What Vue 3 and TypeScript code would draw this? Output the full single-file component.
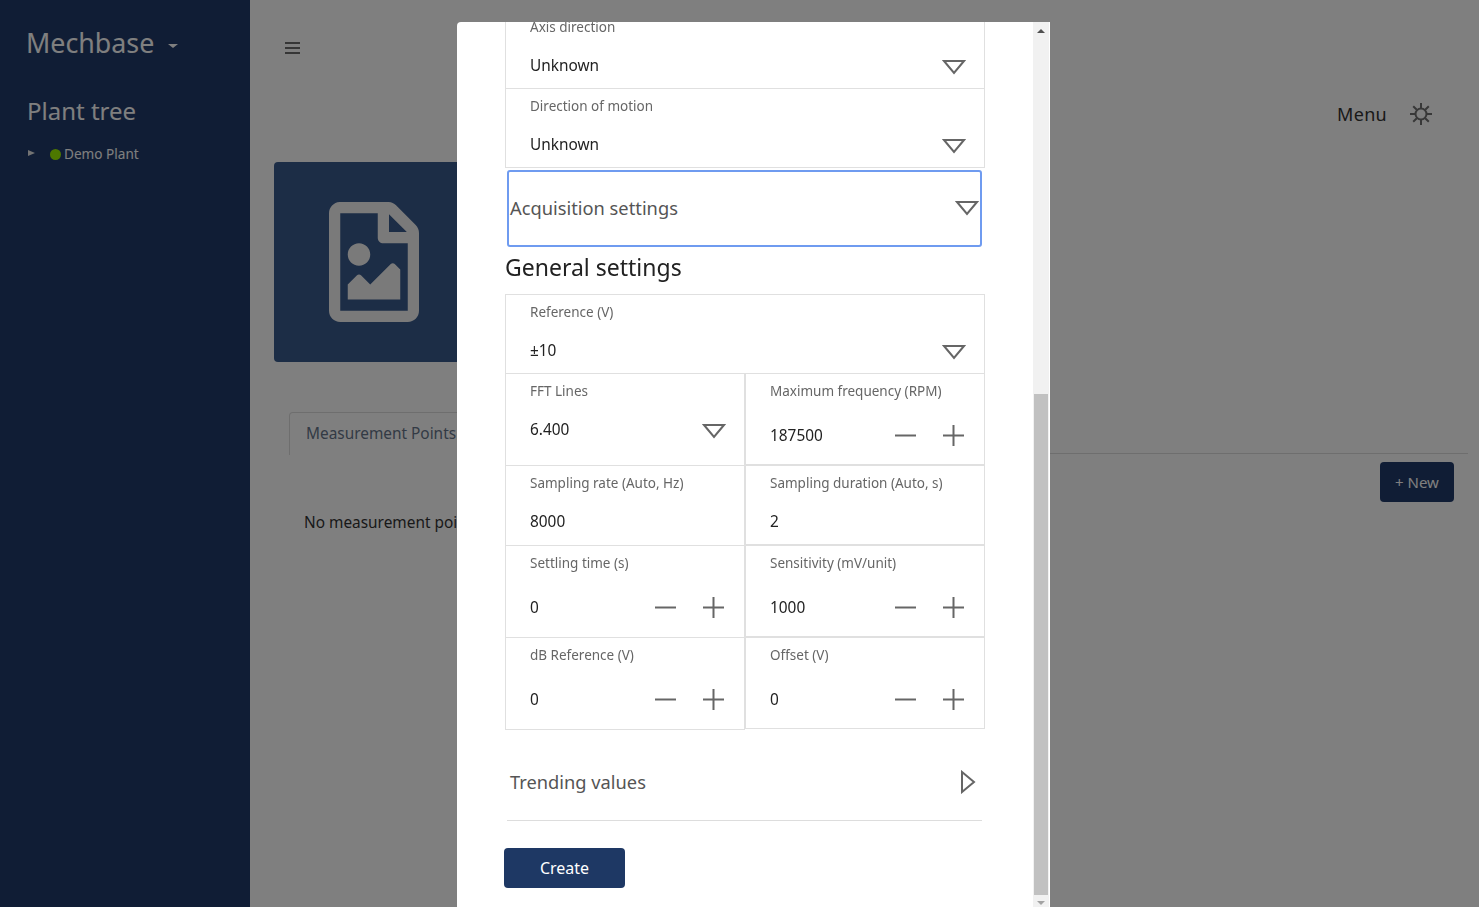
<template>
  <div class="app">
    <aside class="sidebar">
      <div class="brand">Mechbase <span class="brand-caret"></span></div>
      <h2 class="tree-title">Plant tree</h2>
      <div class="tree-node">
        <span class="tree-arrow"></span>
        <span class="tree-dot"></span>
        <span>Demo Plant</span>
      </div>
    </aside>

    <main class="main">
      <div class="topbar">
        <svg class="burger" width="15" height="12" viewBox="0 0 15 12">
          <path d="M0 1h15M0 6h15M0 11h15" stroke="#6c6c6c" stroke-width="2" fill="none" />
        </svg>
      </div>
      <div class="menu-row">
        <span class="menu-label">Menu</span>
        <svg class="sun" width="24" height="24" viewBox="0 0 24 24" fill="none" stroke="#707070" stroke-width="2">
          <circle cx="12" cy="12" r="5.5" />
          <path d="M12 1v5M12 18v5M1 12h5M18 12h5M4.2 4.2l3.6 3.6M16.2 16.2l3.6 3.6M4.2 19.8l3.6-3.6M16.2 7.8l3.6-3.6" />
        </svg>
      </div>

      <div class="cover">
        <svg width="90" height="120" viewBox="0 0 384 512">
          <path fill="#f4f4f4" d="M369.9 97.9L286 14C277 5 264.8-.1 252.1-.1H48C21.5 0 0 21.5 0 48v416c0 26.5 21.5 48 48 48h288c26.5 0 48-21.5 48-48V131.9c0-12.7-5.1-25-14.1-34zM332.1 128H256V51.9l76.1 76.1zM48 464V48h160v104c0 13.3 10.7 24 24 24h104v288H48zm32-48h224V288l-23.5-23.5c-4.7-4.7-12.3-4.7-17 0L176 352l-39.5-39.5c-4.7-4.7-12.3-4.7-17 0L80 352v64zm48-240c-26.5 0-48 21.5-48 48s21.5 48 48 48 48-21.5 48-48-21.5-48-48-48z" />
        </svg>
      </div>

      <div class="tabs">
        <div class="tab">Measurement Points</div>
      </div>
      <div class="tab-actions">
        <button class="new-btn">+ New</button>
      </div>
      <p class="empty">No measurement points</p>
    </main>

    <div class="overlay">
      <div class="modal">
        <div class="modal-body">
          <div class="field">
            <label>Axis direction</label>
            <div class="value-row">
              <span>Unknown</span>
              <svg class="tri" width="24" height="16" viewBox="0 0 24 16"><path d="M2 2h20L12 14z" /></svg>
            </div>
          </div>
          <div class="field">
            <label>Direction of motion</label>
            <div class="value-row">
              <span>Unknown</span>
              <svg class="tri" width="24" height="16" viewBox="0 0 24 16"><path d="M2 2h20L12 14z" /></svg>
            </div>
          </div>

          <button class="accordion accordion--open">
            <span>Acquisition settings</span>
            <svg class="tri" width="24" height="16" viewBox="0 0 24 16"><path d="M2 2h20L12 14z" /></svg>
          </button>

          <h3 class="section-title">General settings</h3>

          <div class="settings-grid">
            <div
              v-for="item in settings"
              :key="item.label"
              class="field"
              :class="{
                'field--wide': item.wide,
                'field--right': item.right,
                'field--tall': item.tall,
                'field--text': item.kind === 'text'
              }"
            >
              <label>{{ item.label }}</label>
              <div class="value-row" :class="{ 'value-row--number': item.kind === 'number' }">
                <span>{{ item.value }}</span>
                <svg v-if="item.kind === 'select'" class="tri" width="24" height="16" viewBox="0 0 24 16">
                  <path d="M2 2h20L12 14z" />
                </svg>
                <div v-if="item.kind === 'number'" class="stepper">
                  <svg width="21" height="21" viewBox="0 0 21 21"><path d="M0 10.5h21" /></svg>
                  <svg width="21" height="21" viewBox="0 0 21 21"><path d="M0 10.5h21M10.5 0v21" /></svg>
                </div>
              </div>
            </div>
          </div>

          <button class="accordion accordion--closed">
            <span>Trending values</span>
            <svg class="tri" width="16" height="24" viewBox="0 0 16 24"><path d="M2 2v20L14 12z" /></svg>
          </button>

          <button class="create-btn">Create</button>
        </div>

        <!-- the window is scrolled to its end, the native bar is not painted in headless -->
        <div class="scrollbar">
          <span class="scroll-arrow scroll-arrow--up"></span>
          <span class="scroll-thumb"></span>
          <span class="scroll-arrow scroll-arrow--down"></span>
        </div>
      </div>
    </div>
  </div>
</template>

<script setup lang="ts">
interface Setting {
  label: string;
  value: string;
  kind: 'select' | 'number' | 'text';
  wide?: boolean;
  right?: boolean;
  tall?: boolean;
}

const settings: Setting[] = [
  { label: 'Reference (V)', value: '±10', kind: 'select', wide: true },
  { label: 'FFT Lines', value: '6.400', kind: 'select', tall: true },
  { label: 'Maximum frequency (RPM)', value: '187500', kind: 'number', right: true },
  { label: 'Sampling rate (Auto, Hz)', value: '8000', kind: 'text' },
  { label: 'Sampling duration (Auto, s)', value: '2', kind: 'text', right: true },
  { label: 'Settling time (s)', value: '0', kind: 'number', tall: true },
  { label: 'Sensitivity (mV/unit)', value: '1000', kind: 'number', right: true },
  { label: 'dB Reference (V)', value: '0', kind: 'number', tall: true },
  { label: 'Offset (V)', value: '0', kind: 'number', right: true }
];
</script>

<style>
html,
body {
  margin: 0;
  height: 100%;
  overflow: hidden;
}
</style>

<style scoped>
.app {
  display: flex;
  height: 907px;
  background: #fff;
  font-family: 'Noto Sans', 'Open Sans', sans-serif;
  color: #333;
}

.sidebar {
  width: 250px;
  flex-shrink: 0;
  background: #203a6a;
  color: #fff;
  padding: 24px 0 0 26px;
  box-sizing: border-box;
}

.brand {
  display: flex;
  align-items: center;
  font-size: 26.8px;
  line-height: 38px;
}

.brand-caret {
  width: 0;
  height: 0;
  margin: 6px 0 0 14px;
  border-left: 5px solid transparent;
  border-right: 5px solid transparent;
  border-top: 4px solid #fff;
}

.tree-title {
  margin: 32px 0 0 1px;
  font-size: 24px;
  font-weight: 400;
  line-height: 34px;
}

.tree-node {
  display: flex;
  align-items: center;
  margin: 16px 0 0 2px;
  font-size: 13.6px;
  line-height: 20px;
}

.tree-arrow {
  width: 0;
  height: 0;
  margin: -3px 15px 0 0;
  border-top: 3.5px solid transparent;
  border-bottom: 3.5px solid transparent;
  border-left: 7px solid #e6e6e6;
}

.tree-dot {
  width: 11px;
  height: 11px;
  margin-right: 3px;
  border-radius: 50%;
  background: #9af000;
}

.main {
  flex: 1;
  min-width: 0;
  padding-left: 24px;
}

.topbar {
  display: flex;
  height: 66px;
  padding: 42px 0 0 11px;
  box-sizing: border-box;
}

.burger {
  display: block;
}

.menu-row {
  display: flex;
  justify-content: flex-end;
  align-items: center;
  gap: 22px;
  height: 96px;
  padding: 0 46px 0 0;
  box-sizing: border-box;
}

.menu-label {
  font-size: 18px;
  letter-spacing: 0.3px;
}

.cover {
  display: flex;
  align-items: center;
  justify-content: center;
  width: 200px;
  height: 200px;
  border-radius: 4px;
  background: #385a8c;
}

.tabs {
  height: 41px;
  margin: 50px 11px 0 15px;
  border-bottom: 1px solid #ddd;
}

.tab {
  width: 180px;
  height: 42px;
  padding-left: 16px;
  border: 1px solid #ddd;
  border-bottom: 0;
  border-radius: 4px 4px 0 0;
  background: #fff;
  font-size: 15.4px;
  line-height: 41px;
  color: #66758a;
  white-space: nowrap;
  overflow: hidden;
}

.tab-actions {
  display: flex;
  justify-content: flex-end;
  padding: 8px 25px 0 0;
}

.new-btn {
  width: 74px;
  height: 40px;
  padding: 0;
  border: 0;
  border-radius: 4px;
  background: #203a6a;
  color: #fff;
  font: inherit;
  font-size: 15px;
}

.empty {
  margin: 0;
  padding: 9px 0 0 30px;
  font-size: 15.4px;
  line-height: 24px;
}

.overlay {
  position: fixed;
  inset: 0;
  z-index: 10;
  background: rgba(0, 0, 0, 0.5);
  overflow: hidden;
}

.modal {
  position: relative;
  width: 593px;
  height: 890px;
  margin: 22px 0 0 457px;
  overflow: hidden;
  border-radius: 4px 0 0 0;
  background: #fff;
  color: #222;
}

/* anchored to the end of the form, the top runs out of the window */
.modal-body {
  display: flex;
  flex-direction: column;
  align-items: flex-start;
  justify-content: flex-end;
  height: 100%;
  padding: 0 65px 24px 48px;
  box-sizing: border-box;
}

.scrollbar {
  position: absolute;
  top: 0;
  right: 1px;
  bottom: 0;
  width: 16px;
  background: #f1f1f1;
}

.scroll-thumb {
  position: absolute;
  top: 372px;
  left: 1px;
  right: 1px;
  height: 501px;
  background: #c1c1c1;
}

.scroll-arrow {
  position: absolute;
  left: 4px;
  width: 0;
  height: 0;
  border-left: 4px solid transparent;
  border-right: 4px solid transparent;
}

.scroll-arrow--up {
  top: 7px;
  border-bottom: 4px solid #505050;
}

.scroll-arrow--down {
  bottom: 7px;
  border-top: 4px solid #a3a3a3;
}

.field {
  display: flex;
  flex-direction: column;
  flex-shrink: 0;
  width: 100%;
  min-height: 80px;
  margin-top: -1px;
  padding: 9px 0 0 24px;
  box-sizing: border-box;
  border: 1px solid #e0e0e0;
}

.field--tall {
  min-height: 93px;
}

.field--text {
  min-height: 81px;
}

.field--wide {
  grid-column: 1 / -1;
}

.field--right {
  min-height: 0;
  margin-bottom: 1px;
}

.field label {
  font-size: 13.5px;
  line-height: 16px;
  color: #666;
  white-space: nowrap;
}

.value-row {
  display: flex;
  align-items: center;
  justify-content: space-between;
  height: 24px;
  margin-top: 18px;
  padding-right: 18px;
  font-size: 15.4px;
}

.value-row--number {
  margin-top: 24px;
}

.tri {
  display: block;
  flex-shrink: 0;
}

.value-row .tri {
  margin-top: 4px;
}

.tri path {
  fill: none;
  stroke: #666;
  stroke-width: 2;
}

.stepper {
  display: flex;
  gap: 27px;
  margin-right: 2px;
}

.stepper svg {
  display: block;
}

.stepper path {
  fill: none;
  stroke: #666;
  stroke-width: 2;
}

.accordion {
  display: flex;
  flex-shrink: 0;
  align-items: center;
  justify-content: space-between;
  box-sizing: border-box;
  background: #fff;
  font: inherit;
  font-size: 18.3px;
  color: #555;
  text-align: left;
}

.accordion--open {
  width: 475px;
  height: 77px;
  margin: 2px 0 0 2px;
  padding: 0 1px 2px 1px;
  border: 2px solid #6f9bf0;
  border-radius: 3px;
}

.accordion--closed {
  width: 475px;
  height: 91px;
  margin: 0 0 0 2px;
  padding: 12px 6px 0 3px;
  border: 0;
  border-bottom: 1px solid #ddd;
}

.accordion--closed .tri {
  margin-top: 2px;
}

.section-title {
  flex-shrink: 0;
  height: 30px;
  margin: 5px 0 12px;
  font-size: 23px;
  font-weight: 400;
  line-height: 30px;
  color: #222;
}

.settings-grid {
  display: grid;
  flex-shrink: 0;
  grid-template-columns: 240px 240px;
  padding-top: 1px;
}

.create-btn {
  display: block;
  flex-shrink: 0;
  width: 121px;
  height: 40px;
  margin: 27px 0 0 -1px;
  border: 0;
  border-radius: 4px;
  background: #1e3864;
  color: #fff;
  font: inherit;
  font-size: 16px;
}
</style>
